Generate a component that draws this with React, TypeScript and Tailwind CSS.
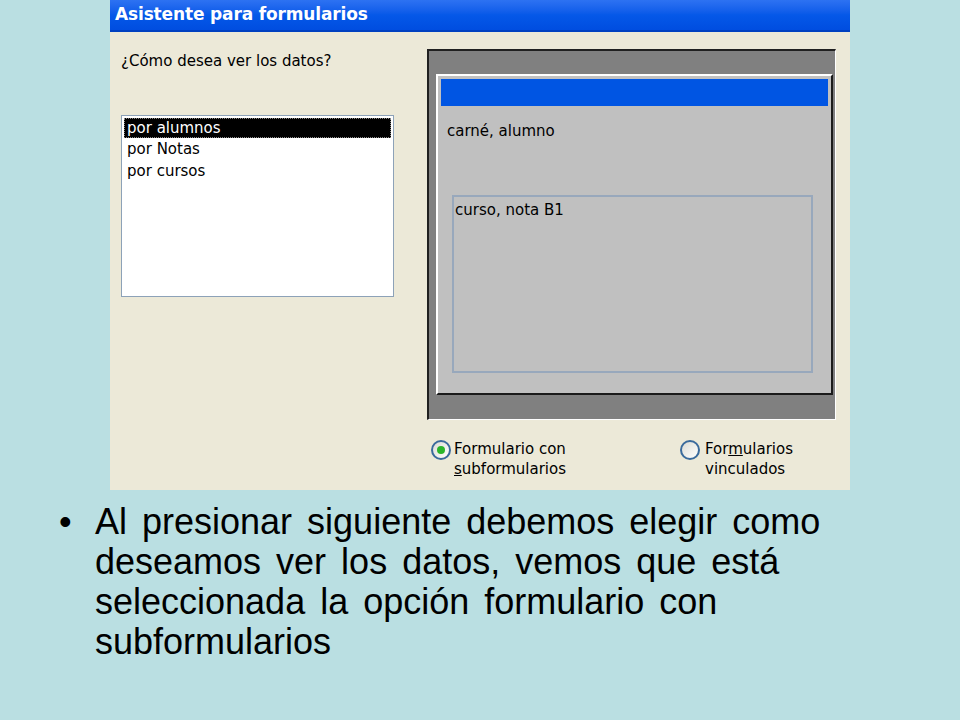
import React from 'react';

const ui = "font-['DejaVu_Sans',Tahoma,sans-serif]";

function Radio({ checked }: { checked?: boolean }) {
  return (
    <span className="mt-[1px] flex h-[20px] w-[20px] shrink-0 items-center justify-center rounded-full border-2 border-[#3a6a9c] bg-gradient-to-br from-[#dcdcd4] to-[#ffffff]">
      {checked ? <span className="h-[8px] w-[8px] rounded-full bg-[#2bb52b]" /> : null}
    </span>
  );
}

export default function App() {
  const items = ['por alumnos', 'por Notas', 'por cursos'];

  return (
    <div className="min-h-[720px] w-[960px] bg-[#badfe2]">
      {/* Wizard screenshot */}
      <div className={`ml-[110px] flex h-[490px] w-[740px] flex-col bg-[#ece9d8] ${ui}`}>
        <div className="flex h-[32px] items-center border-b-2 border-[#0040c0] bg-gradient-to-b from-[#2d72f2] via-[#0558e8] to-[#004de0] pl-[5px] text-[17px] font-bold tracking-[-0.15px] text-white">
          Asistente para formularios
        </div>
        <div className="flex flex-1">
          {/* left column */}
          <div className="flex w-[317px] flex-col pl-[11px]">
            <div className="mt-[18px] text-[15px] text-black">¿Cómo desea ver los datos?</div>
            <div className="mt-[42px] h-[182px] w-[273px] border border-[#8da2b8] bg-white p-[2px] text-[15px] leading-[22px]">
              {items.map((item, i) => (
                <div
                  key={item}
                  className={
                    i === 0
                      ? 'h-[20px] border border-dotted border-[#888] bg-black pl-[2px] leading-[18px] text-white'
                      : 'pl-[3px] text-black'
                  }
                >
                  {item}
                </div>
              ))}
            </div>
          </div>

          {/* right column */}
          <div className="flex flex-col">
            <div className="mt-[17px] h-[371px] w-[409px] border-l-2 border-t-2 border-r border-b border-l-[#202020] border-t-[#202020] border-r-white border-b-white bg-[#808080] pl-[7px] pr-[2px] pt-[23px]">
              <div className="flex h-[321px] flex-col border-l-2 border-t-2 border-r-2 border-b-2 border-l-white border-t-white border-r-[#1a1a1a] border-b-[#1a1a1a] bg-[#c0c0c0] px-[3px] pt-[3px]">
                <div className="h-[27px] bg-[#0055e3]" />
                <div className="mt-[14px] pl-[6px] text-[15px] text-black">carné, alumno</div>
                <div className="ml-[11px] mt-[52px] h-[178px] w-[361px] border-2 border-[#98a8bc] px-[1px] pt-[2px] text-[15px] text-black">
                  curso, nota B1
                </div>
              </div>
            </div>

            <div className="mt-[19px] flex text-[15px] leading-[20px] text-black">
              <div className="flex w-[253px] items-start gap-[3px] pl-[4px]">
                <Radio checked />
                <div>
                  <div>Formulario con</div>
                  <div>
                    <span className="underline">s</span>ubformularios
                  </div>
                </div>
              </div>
              <div className="flex items-start gap-[5px]">
                <Radio />
                <div>
                  <div>
                    For<span className="underline">m</span>ularios
                  </div>
                  <div>vinculados</div>
                </div>
              </div>
            </div>
          </div>
        </div>
      </div>

      {/* Bullet text */}
      <div className="mt-[12px] flex font-['Liberation_Sans',Arial,sans-serif] text-[36px] leading-[40px] text-black">
        <div className="w-[95px] shrink-0 pl-[59px]">•</div>
        <p className="w-[745px] [word-spacing:5px]">
          Al presionar siguiente debemos elegir como deseamos ver los datos, vemos que está seleccionada la opción formulario con subformularios
        </p>
      </div>
    </div>
  );
}
